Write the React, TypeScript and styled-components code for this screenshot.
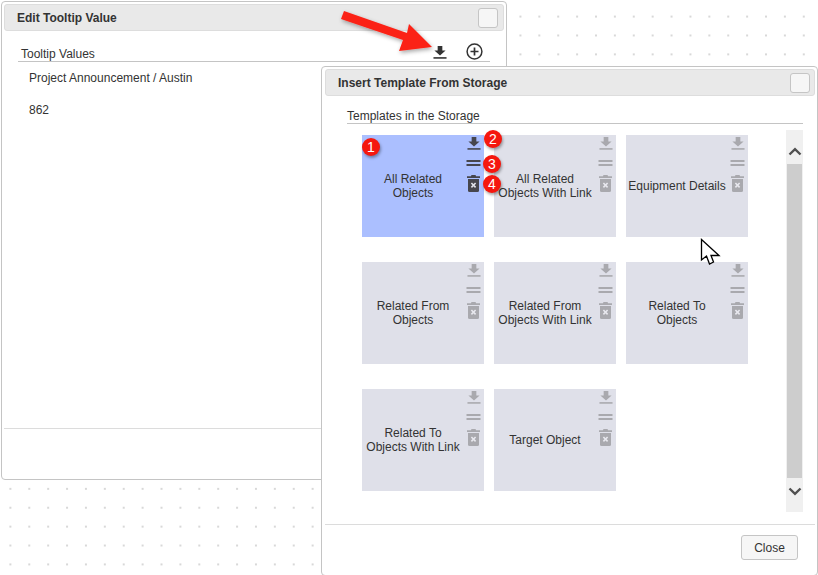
import React from "react";
import styled, { createGlobalStyle } from "styled-components";

const Global = createGlobalStyle`
  html, body { margin: 0; padding: 0; width: 818px; height: 575px; overflow: hidden; background: #fff; }
  body { font-family: "Liberation Sans", Arial, sans-serif; font-size: 12px; color: #333; }
`;

const Desktop = styled.div`
  position: relative;
  width: 818px;
  height: 575px;
  overflow: hidden;
  background-color: #fff;
  background-image: radial-gradient(circle at 1px 1px, #d8d8d8 1px, transparent 1.2px);
  background-size: 18.9px 18.9px;
  background-position: 9.4px 15.6px;
`;

const Win = styled.section<{ $x: number; $y: number; $w: number; $h: number; $pl: number }>`
  position: absolute;
  left: ${(p) => p.$x}px;
  top: ${(p) => p.$y}px;
  width: ${(p) => p.$w}px;
  height: ${(p) => p.$h}px;
  box-sizing: border-box;
  background: #fff;
  border: 1px solid #c4c4c4;
  border-radius: 4px;
  padding: 2px 2px 2px ${(p) => p.$pl}px;
  display: flex;
  flex-direction: column;
`;

const Header = styled.header<{ $pr: number }>`
  height: 27px;
  flex: none;
  box-sizing: border-box;
  background: #e9e9e9;
  border: 1px solid #dddddd;
  border-radius: 3px;
  display: flex;
  align-items: center;
  justify-content: space-between;
  padding: 0 ${(p) => p.$pr}px 0 12px;
`;

const Title = styled.h2`
  margin: 0;
  font-size: 12px;
  font-weight: 700;
  color: #333;
`;

const WinButton = styled.span`
  width: 20px;
  height: 20px;
  box-sizing: border-box;
  background: #f6f6f6;
  border: 1px solid #c5c5c5;
  border-radius: 3px;
`;

const Body = styled.div`
  flex: 1;
  min-height: 0;
`;

const SectionHead = styled.div<{ $ml: number; $w: number; $mt: number; $pl: number }>`
  margin: ${(p) => p.$mt}px 0 0 ${(p) => p.$ml}px;
  width: ${(p) => p.$w}px;
  height: 18px;
  flex: none;
  box-sizing: border-box;
  border-bottom: 1px solid #c4c4c4;
  display: flex;
  align-items: flex-end;
  justify-content: space-between;
  padding: 0 0 0 ${(p) => p.$pl}px;
  line-height: 13px;
  color: #333;
`;

const HeadLabel = styled.span`
  display: block;
`;

const HeadIcons = styled.span`
  display: flex;
  gap: 19px;
  margin-right: 7px;
  margin-bottom: 1px;
  align-items: center;
`;

const ValueRow = styled.div<{ $mt: number }>`
  margin: ${(p) => p.$mt}px 0 0 25px;
  line-height: 15px;
  color: #333;
`;

const Footer = styled.footer`
  flex: none;
  border-top: 1px solid #dcdcdc;
  box-sizing: border-box;
  height: 49px;
  display: flex;
  justify-content: flex-end;
  align-items: flex-start;
  padding: 10px 17px 0 0;
`;

const CloseBtn = styled.button`
  width: 57px;
  height: 25px;
  padding: 0;
  font: 12px "Liberation Sans", Arial, sans-serif;
  color: #333;
  background: #f6f6f6;
  border: 1px solid #c5c5c5;
  border-radius: 3px;
`;

const StorageBody = styled.div`
  flex: 1;
  min-height: 0;
  display: flex;
  flex-direction: column;
`;

const Content = styled.div`
  flex: 1;
  display: flex;
  padding: 6px 12px 0 37px;
  justify-content: space-between;
  align-items: flex-start;
`;

const Grid = styled.div`
  display: grid;
  grid-template-columns: repeat(3, 122px);
  grid-auto-rows: 102px;
  column-gap: 10px;
  row-gap: 25px;
  margin-top: 5px;
`;

const Tile = styled.div<{ $active?: boolean }>`
  position: relative;
  background: ${(p) => (p.$active ? "#abbfff" : "#dfe0e9")};
  display: flex;
  align-items: center;
  justify-content: center;
  text-align: center;
  line-height: 14px;
  padding-right: 20px;
  color: #333;
`;

const TileText = styled.span`
  display: block;
  white-space: nowrap;
`;

const TileActions = styled.div<{ $active?: boolean }>`
  position: absolute;
  right: 3px;
  top: 1px;
  width: 15px;
  display: flex;
  flex-direction: column;
  align-items: center;
  color: ${(p) => (p.$active ? "#46464e" : "#a9a9ae")};
`;

const Scroll = styled.div`
  width: 17px;
  height: 382px;
  background: #f0f0f0;
  display: flex;
  flex-direction: column;
  align-items: center;
`;

const ScrollBtn = styled.div<{ $up?: boolean }>`
  height: 34px;
  width: 15px;
  box-sizing: border-box;
  padding: ${(p) => (p.$up ? "8px 0 0" : "0 0 8px")};
  display: flex;
  align-items: center;
  justify-content: center;
  color: #505050;
  flex: none;
`;

const Thumb = styled.div`
  width: 15px;
  flex: 1;
  background: #cdcdcd;
`;

const Badge = styled.span<{ $x: number; $y: number }>`
  position: absolute;
  left: ${(p) => p.$x}px;
  top: ${(p) => p.$y}px;
  width: 18px;
  height: 18px;
  border-radius: 50%;
  background: #f5170f;
  color: #fff;
  font-size: 14px;
  line-height: 18px;
  text-align: center;
  box-shadow: 1px 2px 3px rgba(0, 0, 0, 0.35);
`;

const Overlay = styled.svg<{ $x: number; $y: number }>`
  position: absolute;
  left: ${(p) => p.$x}px;
  top: ${(p) => p.$y}px;
  overflow: visible;
`;

const DownloadIcon = ({ size = 14 }: { size?: number }) => (
  <svg width={size} height={size} viewBox="0 0 15 15" style={{ display: "block" }}>
    <path d="M5 1h5v5h3.5L7.5 11.2 1.5 6H5z" fill="currentColor" />
    <rect x="0.5" y="13" width="14" height="1.7" fill="currentColor" />
  </svg>
);

const EqualIcon = () => (
  <svg width="15" height="6" viewBox="0 0 15 6" style={{ display: "block" }}>
    <rect x="0.5" y="0" width="14" height="2" fill="currentColor" />
    <rect x="0.5" y="4" width="14" height="2" fill="currentColor" />
  </svg>
);

const TrashIcon = ({ mark }: { mark: string }) => (
  <svg width="13" height="17" viewBox="0 0 13 17" style={{ display: "block" }}>
    <path d="M4.5 0h4l.6 1.3H13v1.6H0V1.3h3.9z" fill="currentColor" />
    <path d="M1 4h11v11.5a1.5 1.5 0 0 1-1.5 1.5h-8A1.5 1.5 0 0 1 1 15.5z" fill="currentColor" />
    <path d="M4.4 8l4.2 4.4M8.6 8l-4.2 4.4" stroke={mark} strokeWidth="1.6" />
  </svg>
);

const PlusCircle = () => (
  <svg width="17" height="17" viewBox="0 0 17 17" style={{ display: "block" }}>
    <circle cx="8.5" cy="8.5" r="7.4" fill="none" stroke="#333" strokeWidth="1.5" />
    <path d="M8.5 4.5v8M4.5 8.5h8" stroke="#333" strokeWidth="1.7" />
  </svg>
);

const Chevron = ({ up }: { up?: boolean }) => (
  <svg width="14" height="9" viewBox="0 0 14 9" style={{ display: "block" }}>
    <path d={up ? "M1.5 7.5L7 2.2l5.5 5.3" : "M1.5 1.5L7 6.8l5.5-5.3"} fill="none" stroke="currentColor" strokeWidth="2.4" />
  </svg>
);

const ActionGap = styled.span<{ $h: number }>`
  display: block;
  height: ${(p) => p.$h}px;
`;

const tiles = [
  ["All Related", "Objects"],
  ["All Related", "Objects With Link"],
  ["Equipment Details"],
  ["Related From", "Objects"],
  ["Related From", "Objects With Link"],
  ["Related To", "Objects"],
  ["Related To", "Objects With Link"],
  ["Target Object"],
];

export default function App() {
  return (
    <Desktop>
      <Global />
      <Win $x={1} $y={1} $w={506} $h={479} $pl={2}>
        <Header $pr={5}>
          <Title>Edit Tooltip Value</Title>
          <WinButton />
        </Header>
        <Body>
          <SectionHead $ml={14} $w={472} $mt={13} $pl={3}>
            <HeadLabel>Tooltip Values</HeadLabel>
            <HeadIcons>
              <DownloadIcon />
              <PlusCircle />
            </HeadIcons>
          </SectionHead>
          <ValueRow $mt={9}>Project Announcement / Austin</ValueRow>
          <ValueRow $mt={17}>862</ValueRow>
        </Body>
        <Footer />
      </Win>

      <Win $x={321} $y={66} $w={497} $h={510} $pl={3}>
        <Header $pr={4}>
          <Title>Insert Template From Storage</Title>
          <WinButton />
        </Header>
        <StorageBody>
          <SectionHead $ml={22} $w={456} $mt={10} $pl={0}>
            <HeadLabel>Templates in the Storage</HeadLabel>
          </SectionHead>
          <Content>
            <Grid>
              {tiles.map((lines, i) => (
                <Tile key={i} $active={i === 0}>
                  <TileText>
                    {lines.map((l, j) => (
                      <React.Fragment key={j}>
                        {l}
                        {j < lines.length - 1 && <br />}
                      </React.Fragment>
                    ))}
                  </TileText>
                  <TileActions $active={i === 0}>
                    <DownloadIcon />
                    <ActionGap $h={10} />
                    <EqualIcon />
                    <ActionGap $h={9} />
                    <TrashIcon mark={i === 0 ? "#dfe0e9" : "#e8e8ee"} />
                  </TileActions>
                </Tile>
              ))}
            </Grid>
            <Scroll>
              <ScrollBtn $up><Chevron up /></ScrollBtn>
              <Thumb />
              <ScrollBtn><Chevron /></ScrollBtn>
            </Scroll>
          </Content>
          <Footer>
            <CloseBtn>Close</CloseBtn>
          </Footer>
        </StorageBody>
      </Win>

      <Overlay $x={340} $y={10} width="96" height="46" viewBox="0 0 96 46">
        <defs>
          <filter id="sh" x="-20%" y="-20%" width="140%" height="150%">
            <feDropShadow dx="1" dy="2" stdDeviation="2" floodOpacity="0.35" />
          </filter>
        </defs>
        <path d="M4 1L1 9 63 30 59 41 92 37 69 14 67 23z" fill="#fb2116" filter="url(#sh)" />
      </Overlay>
      <Badge $x={362} $y={138}>1</Badge>
      <Badge $x={484} $y={130}>2</Badge>
      <Badge $x={483} $y={155}>3</Badge>
      <Badge $x={483} $y={175}>4</Badge>
      <Overlay $x={700} $y={238} width="21" height="28" viewBox="0 0 21 28">
        <path d="M1.5 1.5V22L6.5 18 9.5 26 13.5 24 11 17.5H19z" fill="#fff" stroke="#000" strokeWidth="1.3" />
      </Overlay>
    </Desktop>
  );
}
